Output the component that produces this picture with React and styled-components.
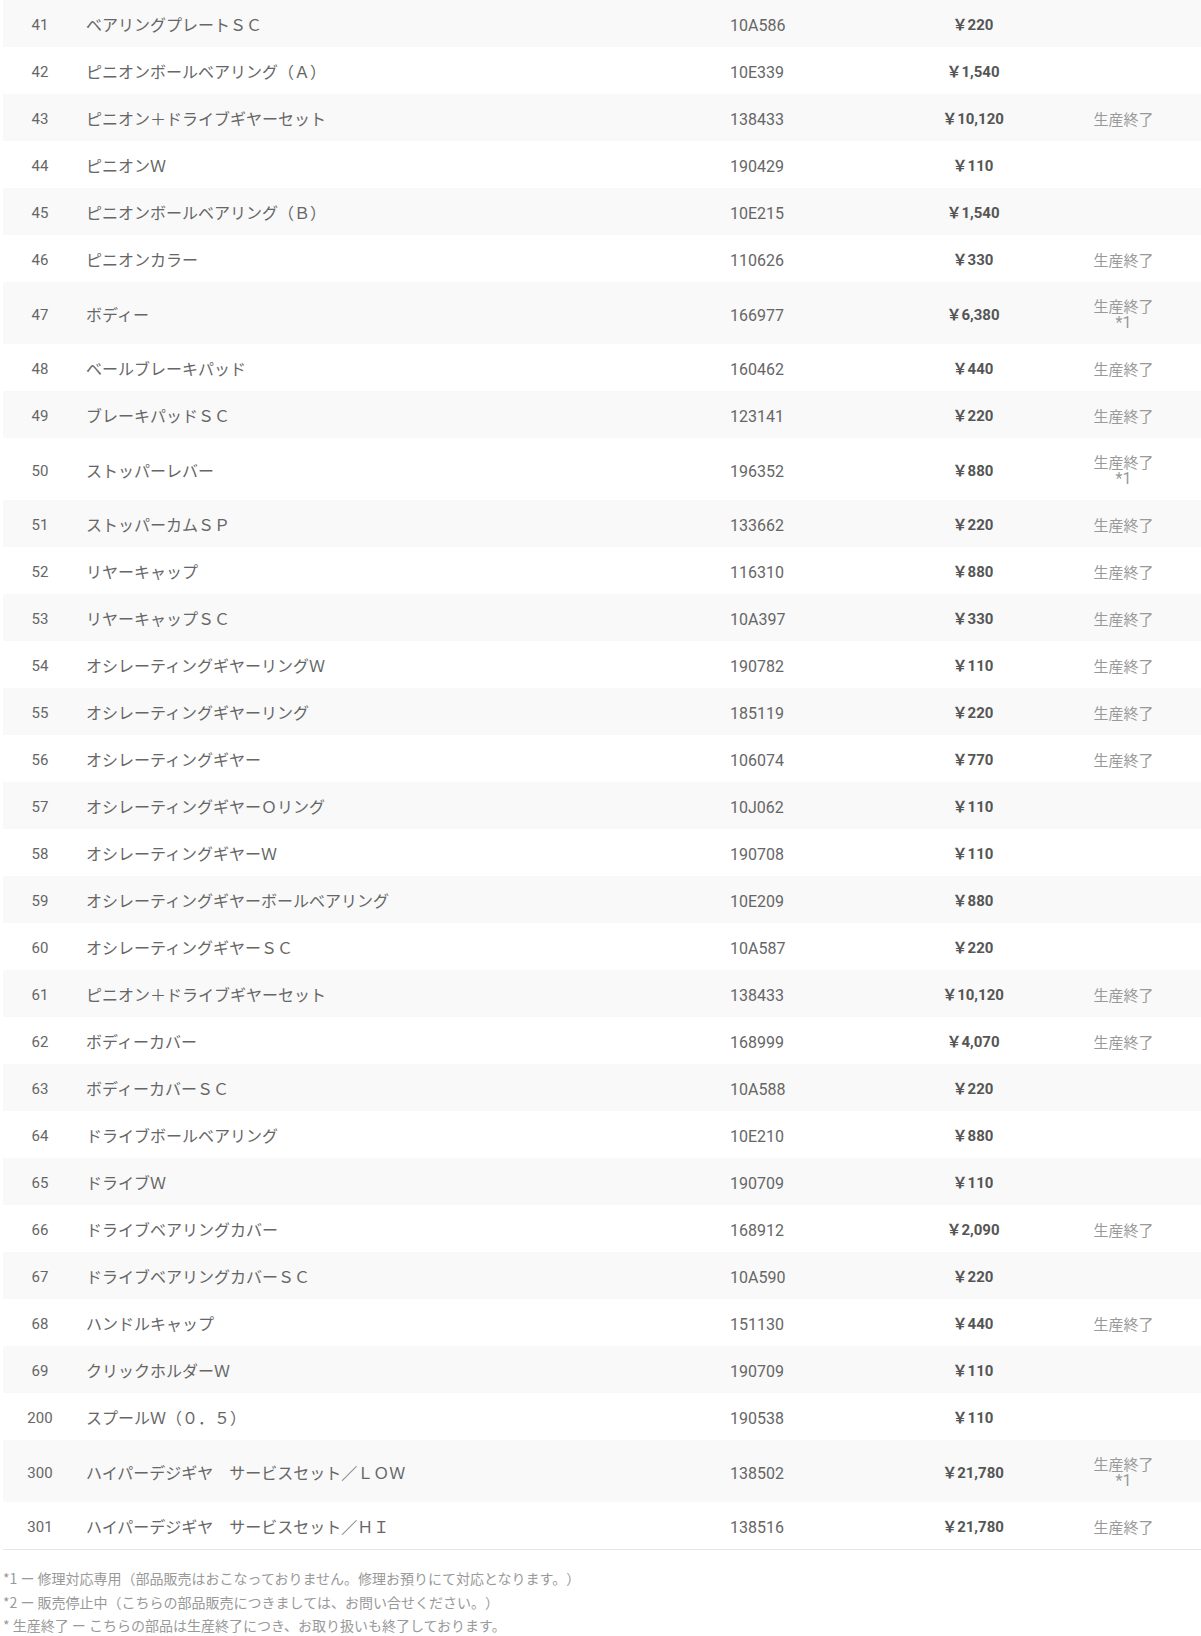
import React from 'react';
import styled, { createGlobalStyle } from 'styled-components';

const GlobalStyle = createGlobalStyle`
  body {
    margin: 0;
    background: #fff;
    font-family: Roboto, "Noto Sans CJK JP", sans-serif;
    text-spacing-trim: space-all;
  }
`;

const Page = styled.div`
  padding-left: 3px;
`;

const Table = styled.div`
  border-bottom: 1px solid #e6e6e6;
`;

const Row = styled.div`
  box-sizing: border-box;
  display: grid;
  grid-template-columns: 74px 653px 170px 146px 155px;
  align-items: center;
  background: ${(p) => (p.$striped ? '#f9f9f9' : '#fff')};
  min-height: 47px;
  padding-top: 4px;
  line-height: 17px;
`;

const NoCell = styled.div`
  text-align: center;
  font-size: 15px;
  color: #666;
`;

const NameCell = styled.div`
  padding-left: 9px;
  font-size: 16px;
  color: #666;
`;

const CodeCell = styled.div`
  font-size: 16px;
  color: #666;
`;

const PriceCell = styled.div`
  text-align: center;
  font-size: 15px;
  font-weight: 700;
  color: #555;
`;

const StatusCell = styled.div`
  text-align: center;
  font-size: 15px;
  line-height: 16px;
  color: #999;
  padding: 13px 0;
`;

const Note = styled.span`
  display: block;
  font-size: 16px;
  line-height: 16px;
`;

const Notes = styled.div`
  padding-top: 17px;
  font-size: 14px;
  line-height: 23.5px;
  color: #999;
  font-family: "Noto Sans CJK JP", sans-serif;
`;

const parts = [
  ['41', 'ベアリングプレートＳＣ', '10A586', '220', ''],
  ['42', 'ピニオンボールベアリング（Ａ）', '10E339', '1,540', ''],
  ['43', 'ピニオン＋ドライブギヤーセット', '138433', '10,120', '生産終了'],
  ['44', 'ピニオンＷ', '190429', '110', ''],
  ['45', 'ピニオンボールベアリング（Ｂ）', '10E215', '1,540', ''],
  ['46', 'ピニオンカラー', '110626', '330', '生産終了'],
  ['47', 'ボディー', '166977', '6,380', '生産終了', '*1'],
  ['48', 'ベールブレーキパッド', '160462', '440', '生産終了'],
  ['49', 'ブレーキパッドＳＣ', '123141', '220', '生産終了'],
  ['50', 'ストッパーレバー', '196352', '880', '生産終了', '*1'],
  ['51', 'ストッパーカムＳＰ', '133662', '220', '生産終了'],
  ['52', 'リヤーキャップ', '116310', '880', '生産終了'],
  ['53', 'リヤーキャップＳＣ', '10A397', '330', '生産終了'],
  ['54', 'オシレーティングギヤーリングＷ', '190782', '110', '生産終了'],
  ['55', 'オシレーティングギヤーリング', '185119', '220', '生産終了'],
  ['56', 'オシレーティングギヤー', '106074', '770', '生産終了'],
  ['57', 'オシレーティングギヤーＯリング', '10J062', '110', ''],
  ['58', 'オシレーティングギヤーＷ', '190708', '110', ''],
  ['59', 'オシレーティングギヤーボールベアリング', '10E209', '880', ''],
  ['60', 'オシレーティングギヤーＳＣ', '10A587', '220', ''],
  ['61', 'ピニオン＋ドライブギヤーセット', '138433', '10,120', '生産終了'],
  ['62', 'ボディーカバー', '168999', '4,070', '生産終了'],
  ['63', 'ボディーカバーＳＣ', '10A588', '220', ''],
  ['64', 'ドライブボールベアリング', '10E210', '880', ''],
  ['65', 'ドライブＷ', '190709', '110', ''],
  ['66', 'ドライブベアリングカバー', '168912', '2,090', '生産終了'],
  ['67', 'ドライブベアリングカバーＳＣ', '10A590', '220', ''],
  ['68', 'ハンドルキャップ', '151130', '440', '生産終了'],
  ['69', 'クリックホルダーＷ', '190709', '110', ''],
  ['200', 'スプールＷ（０．５）', '190538', '110', ''],
  ['300', 'ハイパーデジギヤ　サービスセット／ＬＯＷ', '138502', '21,780', '生産終了', '*1'],
  ['301', 'ハイパーデジギヤ　サービスセット／ＨＩ', '138516', '21,780', '生産終了'],
];

export default function App() {
  return (
    <Page>
      <GlobalStyle />
      <Table>
        {parts.map(([no, name, code, price, status, note], i) => (
          <Row key={no} $striped={i % 2 === 0}>
            <NoCell>{no}</NoCell>
            <NameCell>{name}</NameCell>
            <CodeCell>{code}</CodeCell>
            <PriceCell>￥{price}</PriceCell>
            <StatusCell>
              {status}
              {note && <Note>{note}</Note>}
            </StatusCell>
          </Row>
        ))}
      </Table>
      <Notes>
        <div>*1 ー 修理対応専用（部品販売はおこなっておりません。修理お預りにて対応となります。）</div>
        <div>*2 ー 販売停止中（こちらの部品販売につきましては、お問い合せください。）</div>
        <div>* 生産終了 ー こちらの部品は生産終了につき、お取り扱いも終了しております。</div>
      </Notes>
    </Page>
  );
}
